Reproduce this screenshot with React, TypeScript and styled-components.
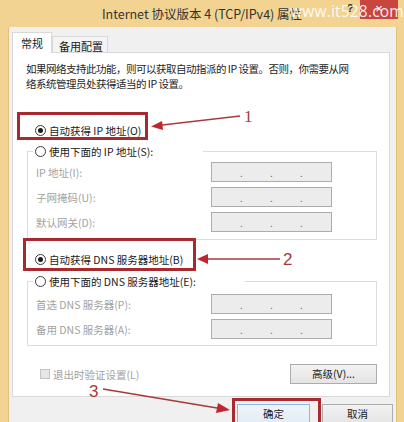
import React from 'react';
import styled, { createGlobalStyle } from 'styled-components';

const Global = createGlobalStyle`
  html, body { margin: 0; padding: 0; background: #f2d391; }
  body {
    width: 404px; height: 422px; overflow: hidden;
    font-family: "Noto Sans CJK SC", "Noto Sans", sans-serif;
  }
  * { box-sizing: border-box; }
`;

const Win = styled.div`
  position: relative;
  width: 404px;
  height: 422px;
  overflow: hidden;
  background: #f2d391;
  display: flex;
  flex-direction: column;
`;

const TitleBar = styled.div`
  height: 27px;
  flex: none;
  display: grid;
  grid-template-columns: 1fr auto 1fr;
`;

const Title = styled.div`
  grid-column: 2;
  align-self: center;
  font-size: 12.5px;
  color: #333;
  white-space: nowrap;
  margin-top: -1px;
`;

const Controls = styled.div`
  grid-column: 3;
  justify-self: end;
  display: flex;
  align-items: flex-start;
  gap: 4px;
  margin-right: 6px;
`;

const Help = styled.span`
  width: 12px;
  margin-top: 2px;
  font-size: 11px;
  font-weight: bold;
  color: #333;
  text-align: center;
  font-family: "Liberation Sans", sans-serif;
`;

const Close = styled.span`
  width: 38px;
  height: 19px;
  background: #c9453f;
  color: #fff;
  font-family: "Liberation Sans", sans-serif;
  font-size: 13px;
  line-height: 18px;
  text-align: center;
`;

const Watermark = styled.span`
  position: absolute;
  left: 290px;
  top: 0px;
  font-family: "Open Sans", sans-serif;
  font-size: 15.5px;
  color: rgba(255, 255, 255, 0.92);
  letter-spacing: 0.2px;
`;

const Body = styled.div`
  flex: 1;
  margin: 0 7px 0 8px;
  background: #f0f0f0;
  border-left: 1px solid #e0c27f;
  border-right: 1px solid #e0c27f;
  padding-top: 5px;
  display: flex;
  flex-direction: column;
`;

const TabStrip = styled.div`
  display: flex;
  align-items: flex-end;
  padding-left: 3px;
  height: 21px;
  margin-bottom: -1px;
  position: relative;
  z-index: 1;
`;

const Tab = styled.div<{ $active?: boolean }>`
  height: ${(p) => (p.$active ? '21px' : '17px')};
  padding: ${(p) => (p.$active ? '3px 8px 0 8px' : '2px 4px 0 6px')};
  background: ${(p) => (p.$active ? '#fff' : '#f4f4f4')};
  border: 1px solid #d9d9d9;
  border-bottom: ${(p) => (p.$active ? 'none' : '1px solid #d9d9d9')};
  font-size: 11px;
  line-height: 15px;
  color: #1a1a1a;
  white-space: nowrap;
`;

const Panel = styled.div`
  margin: 0 6px 0 3px;
  background: #fff;
  border: 1px solid #d9d9d9;
  padding: 8px 12px 12px 13px;
  display: flex;
  flex-direction: column;
`;

const Para = styled.p`
  margin: 0;
  font-size: 10.5px;
  line-height: 15px;
  letter-spacing: -0.5px;
  color: #1e1e1e;
`;

const OptionRow = styled.div<{ $mt: number }>`
  display: flex;
  align-items: center;
  gap: 3px;
  height: 16px;
  margin-top: ${(p) => p.$mt}px;
  padding-left: 9px;
  font-size: 10.5px;
  color: #1a1a1a;
  white-space: nowrap;
`;

const Radio = styled.span<{ $checked?: boolean }>`
  width: 11px;
  height: 11px;
  border-radius: 50%;
  border: 1px solid #3a3a3a;
  background: #fff;
  display: inline-flex;
  align-items: center;
  justify-content: center;
  flex: none;
  &::after {
    content: '';
    width: 5px;
    height: 5px;
    border-radius: 50%;
    background: #1b1b1b;
    display: ${(p) => (p.$checked ? 'block' : 'none')};
  }
`;

const Group = styled.fieldset<{ $mt: number; $pt: number; $pb: number }>`
  margin: ${(p) => p.$mt}px 0 0 1px;
  border: 1px solid #dcdcdc;
  padding: ${(p) => p.$pt}px 0 ${(p) => p.$pb}px 5px;
  min-width: 0;
  display: flex;
  flex-direction: column;
  gap: 5px;
`;

const Legend = styled.legend<{ $w: number }>`
  width: ${(p) => p.$w}px;
  height: 16px;
  padding: 0 0 0 2px;
  display: flex;
  align-items: center;
  gap: 3px;
  font-size: 10.5px;
  color: #1a1a1a;
  white-space: nowrap;
  background: #fff;
`;

const FieldRow = styled.div`
  display: grid;
  grid-template-columns: 175px 121px;
  align-items: center;
  padding-left: 3px;
  height: 20px;
`;

const FieldLabel = styled.span`
  font-size: 10.5px;
  color: #a2a2a2;
  white-space: nowrap;
`;

const IpBox = styled.div`
  height: 20px;
  background: #ececec;
  border: 1px solid #acacac;
  display: flex;
  justify-content: center;
  align-items: center;
  gap: 27px;
`;

const Dot = styled.span`
  width: 3px;
  font-size: 10px;
  line-height: 10px;
  color: #6e6e6e;
  margin-top: 2px;
  text-align: center;
`;

const BottomRow = styled.div`
  display: flex;
  justify-content: space-between;
  align-items: center;
  margin-top: 18px;
  height: 20px;
`;

const CheckWrap = styled.div`
  display: flex;
  align-items: center;
  gap: 3px;
  padding-left: 14px;
  font-size: 10.5px;
  color: #a2a2a2;
  white-space: nowrap;
`;

const CheckBox = styled.span`
  width: 10px;
  height: 10px;
  background: #e6e6e6;
  border: 1px solid #c4c4c4;
  flex: none;
`;

const Button = styled.div<{ $w: number; $default?: boolean }>`
  width: ${(p) => p.$w}px;
  height: 20px;
  border: 1px solid ${(p) => (p.$default ? '#8cbbe6' : '#acacac')};
  background: ${(p) =>
    p.$default ? 'linear-gradient(#eef4fa, #e3ecf5)' : 'linear-gradient(#f2f2f2, #e4e4e4)'};
  font-size: 10.5px;
  line-height: 18px;
  color: #1a1a1a;
  text-align: center;
  white-space: nowrap;
`;

const ButtonRow = styled.div`
  display: flex;
  justify-content: flex-end;
  gap: 12px;
  margin-top: 7px;
  padding-right: 3px;
`;

const Overlay = styled.div`
  position: absolute;
  inset: 0;
  pointer-events: none;
`;

const RedBox = styled.div`
  position: absolute;
  border: 3px solid #a8292e;
`;

const Num = styled.span<{ $serif?: boolean }>`
  position: absolute;
  font-family: ${(p) => (p.$serif ? '"Liberation Serif", serif' : '"Liberation Sans", sans-serif')};
  font-size: 17px;
  line-height: 17px;
  color: #a8393c;
`;

const ArrowSvg = styled.svg`
  position: absolute;
  left: 0;
  top: 0;
`;

function Ip() {
  return (
    <IpBox>
      <Dot>.</Dot>
      <Dot>.</Dot>
      <Dot>.</Dot>
    </IpBox>
  );
}

export default function App() {
  return (
    <Win>
      <Global />
      <TitleBar>
        <Title>Internet 协议版本 4 (TCP/IPv4) 属性</Title>
        <Controls>
          <Help>?</Help>
          <Close>×</Close>
        </Controls>
      </TitleBar>
      <Watermark>www.it528.com</Watermark>
      <Body>
        <TabStrip>
          <Tab $active>常规</Tab>
          <Tab>备用配置</Tab>
        </TabStrip>
        <Panel>
          <Para>
            如果网络支持此功能，则可以获取自动指派的 IP 设置。否则，你需要从网
            <br />
            络系统管理员处获得适当的 IP 设置。
          </Para>
          <OptionRow $mt={31}>
            <Radio $checked />
            自动获得 IP 地址(O)
          </OptionRow>
          <Group $mt={5} $pt={3} $pb={7}>
            <Legend $w={170}>
              <Radio />
              使用下面的 IP 地址(S):
            </Legend>
            <FieldRow>
              <FieldLabel>IP 地址(I):</FieldLabel>
              <Ip />
            </FieldRow>
            <FieldRow>
              <FieldLabel>子网掩码(U):</FieldLabel>
              <Ip />
            </FieldRow>
            <FieldRow>
              <FieldLabel>默认网关(D):</FieldLabel>
              <Ip />
            </FieldRow>
          </Group>
          <OptionRow $mt={11}>
            <Radio $checked />
            自动获得 DNS 服务器地址(B)
          </OptionRow>
          <Group $mt={6} $pt={5} $pb={6}>
            <Legend $w={212}>
              <Radio />
              使用下面的 DNS 服务器地址(E):
            </Legend>
            <FieldRow>
              <FieldLabel>首选 DNS 服务器(P):</FieldLabel>
              <Ip />
            </FieldRow>
            <FieldRow>
              <FieldLabel>备用 DNS 服务器(A):</FieldLabel>
              <Ip />
            </FieldRow>
          </Group>
          <BottomRow>
            <CheckWrap>
              <CheckBox />
              退出时验证设置(L)
            </CheckWrap>
            <Button $w={87}>高级(V)...</Button>
          </BottomRow>
        </Panel>
        <ButtonRow>
          <Button $w={73} $default>确定</Button>
          <Button $w={71}>取消</Button>
        </ButtonRow>
      </Body>
      <Overlay>
        <RedBox style={{ left: 17, top: 112, width: 131, height: 28 }} />
        <RedBox style={{ left: 23, top: 238, width: 173, height: 33 }} />
        <RedBox style={{ left: 232, top: 398, width: 89, height: 30 }} />
        <ArrowSvg width="404" height="422" viewBox="0 0 404 422">
          <g stroke="#a8393c" strokeWidth="1.3" fill="none">
            <line x1="158" y1="125.5" x2="240" y2="116" />
            <line x1="203" y1="259" x2="280" y2="259" />
            <line x1="103" y1="389" x2="223" y2="409" />
          </g>
          <g fill="#c0272d">
            <polygon points="151,126.5 162,121 163,130" />
            <polygon points="197,259 208,254 208,264" />
            <polygon points="230,410 218,403 216,413" />
          </g>
        </ArrowSvg>
        <Num $serif style={{ left: 244, top: 108 }}>1</Num>
        <Num style={{ left: 283, top: 251 }}>2</Num>
        <Num style={{ left: 89, top: 383 }}>3</Num>
      </Overlay>
    </Win>
  );
}
